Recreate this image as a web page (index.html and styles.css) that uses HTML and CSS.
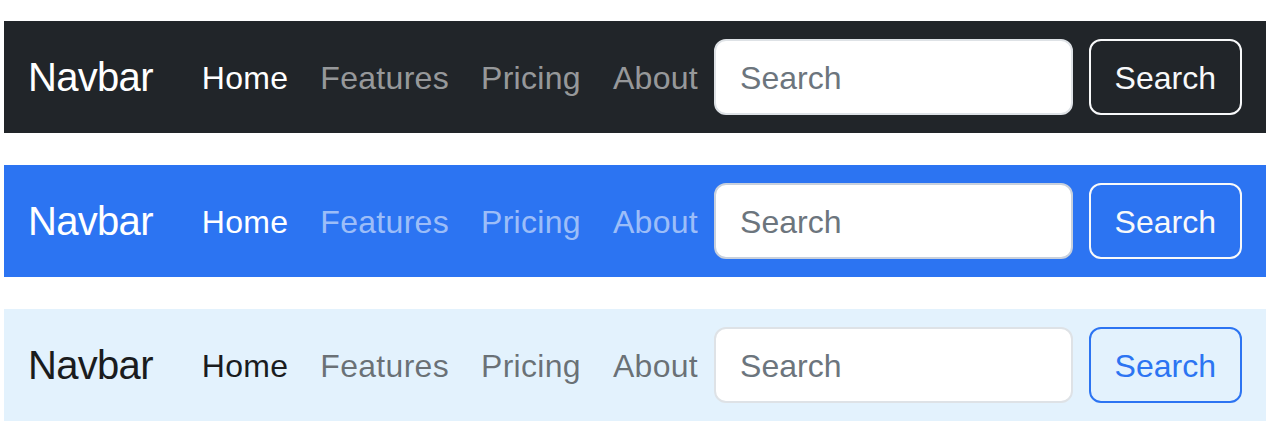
FILE: index.html
```html
<!DOCTYPE html>
<html lang="en">
<head>
<meta charset="utf-8">
<title>Navbars</title>
<link rel="stylesheet" href="styles.css">
</head>
<body>
  <nav class="navbar navbar-dark">
    <div class="nav-inner">
      <a class="brand" href="#">Navbar</a>
      <ul class="nav-links">
        <li><a class="nav-link active" href="#">Home</a></li>
        <li><a class="nav-link" href="#">Features</a></li>
        <li><a class="nav-link" href="#">Pricing</a></li>
        <li><a class="nav-link" href="#">About</a></li>
      </ul>
      <form class="search-form">
        <input class="search-input" type="search" placeholder="Search">
        <button class="search-btn" type="button">Search</button>
      </form>
    </div>
  </nav>
  <nav class="navbar navbar-primary">
    <div class="nav-inner">
      <a class="brand" href="#">Navbar</a>
      <ul class="nav-links">
        <li><a class="nav-link active" href="#">Home</a></li>
        <li><a class="nav-link" href="#">Features</a></li>
        <li><a class="nav-link" href="#">Pricing</a></li>
        <li><a class="nav-link" href="#">About</a></li>
      </ul>
      <form class="search-form">
        <input class="search-input" type="search" placeholder="Search">
        <button class="search-btn" type="button">Search</button>
      </form>
    </div>
  </nav>
  <nav class="navbar navbar-light">
    <div class="nav-inner">
      <a class="brand" href="#">Navbar</a>
      <ul class="nav-links">
        <li><a class="nav-link active" href="#">Home</a></li>
        <li><a class="nav-link" href="#">Features</a></li>
        <li><a class="nav-link" href="#">Pricing</a></li>
        <li><a class="nav-link" href="#">About</a></li>
      </ul>
      <form class="search-form">
        <input class="search-input" type="search" placeholder="Search">
        <button class="search-btn" type="button">Search</button>
      </form>
    </div>
  </nav>
</body>
</html>
```

FILE: styles.css
```css
* { box-sizing: border-box; }

body {
  margin: 0;
  padding: 21px 16px 0 4px;
  font-family: "Liberation Sans", Arial, sans-serif;
  background: #ffffff;
}

.navbar {
  padding: 16px 0;
  margin-bottom: 32px;
}

.nav-inner {
  display: flex;
  align-items: center;
  padding: 0 24px;
}

.brand {
  font-size: 40px;
  line-height: 60px;
  padding: 10px 0;
  margin-right: 33px;
  letter-spacing: -0.7px;
  text-decoration: none;
  white-space: nowrap;
}

.nav-links {
  display: flex;
  list-style: none;
  margin: 0;
  padding: 0;
}

.nav-link {
  display: block;
  font-size: 32px;
  line-height: 48px;
  padding: 17px 16px 15px;
  letter-spacing: 0.3px;
  text-decoration: none;
  white-space: nowrap;
}

.search-form {
  flex: 1;
  display: flex;
  align-items: center;
  margin: 0;
  min-width: 0;
}

.search-input {
  flex: 1;
  min-width: 0;
  height: 76px;
  font-family: inherit;
  font-size: 32px;
  line-height: 48px;
  padding: 13px 24px 11px;
  border: 2px solid #dee2e6;
  border-radius: 12px;
  background: #ffffff;
  color: #212529;
  margin-right: 16px;
  outline: none;
}

.search-input::placeholder { color: #6c757d; }

.search-btn {
  height: 76px;
  font-family: inherit;
  font-size: 32px;
  line-height: 48px;
  padding: 13px 24px 11px;
  border-radius: 12px;
  background: transparent;
  border: 2px solid;
  cursor: pointer;
  white-space: nowrap;
}

/* Dark */
.navbar-dark { background: #212529; }
.navbar-dark .brand { color: #ffffff; }
.navbar-dark .nav-link { color: rgba(255, 255, 255, 0.55); }
.navbar-dark .nav-link.active { color: #ffffff; }
.navbar-dark .search-btn { color: #f8f9fa; border-color: #f8f9fa; }

/* Primary */
.navbar-primary { background: #2c74f2; }
.navbar-primary .brand { color: #ffffff; }
.navbar-primary .nav-link { color: rgba(255, 255, 255, 0.55); }
.navbar-primary .nav-link.active { color: #ffffff; }
.navbar-primary .search-input { border-color: #c8d0dc; }
.navbar-primary .search-btn { color: #f8f9fa; border-color: #f8f9fa; }

/* Light */
.navbar-light { background: #e3f2fd; }
.navbar-light .brand { color: #1a1c1e; }
.navbar-light .nav-link { color: rgba(0, 0, 0, 0.55); }
.navbar-light .nav-link.active { color: #1a1c1e; }
.navbar-light .search-btn { color: #2c74f2; border-color: #2c74f2; }
```
